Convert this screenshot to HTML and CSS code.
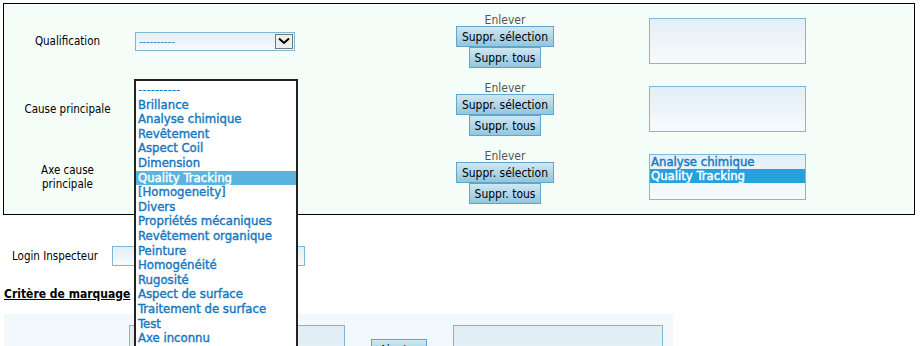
FILE: index.html
```html
<!DOCTYPE html>
<html lang="fr">
<head>
    <title>Saisie défaut</title>
    <link rel="stylesheet" href="styles.css">
</head>
<body>
    <div class="criteria">
        <div class="crit-row">
            <div class="crit-label">Qualification</div>
            <div class="crit-input">
                <div class="fake-select">
                    <span>----------</span>
                    <span class="select-arrow">
                        <svg width="12" height="8" viewBox="0 0 12 8"><path d="M1 1.5 L6 6 L11 1.5" fill="none" stroke="#000" stroke-width="2"/></svg>
                    </span>
                </div>
            </div>
            <div class="crit-actions">
                <span class="remove-title">Enlever</span>
                <button class="btn">Suppr. sélection</button>
                <button class="btn">Suppr. tous</button>
            </div>
            <div class="crit-chosen">
                <div class="chosen-box"></div>
            </div>
        </div>

        <div class="crit-row">
            <div class="crit-label">Cause principale</div>
            <div class="crit-input"></div>
            <div class="crit-actions">
                <span class="remove-title">Enlever</span>
                <button class="btn">Suppr. sélection</button>
                <button class="btn">Suppr. tous</button>
            </div>
            <div class="crit-chosen">
                <div class="chosen-box"></div>
            </div>
        </div>

        <div class="crit-row">
            <div class="crit-label">Axe cause<br>principale</div>
            <div class="crit-input"></div>
            <div class="crit-actions">
                <span class="remove-title">Enlever</span>
                <button class="btn">Suppr. sélection</button>
                <button class="btn">Suppr. tous</button>
            </div>
            <div class="crit-chosen">
                <div class="chosen-box">
                    <div class="chosen-item">Analyse chimique</div>
                    <div class="chosen-item selected">Quality Tracking</div>
                </div>
            </div>
        </div>
    </div>

    <div class="login-row">
        <label class="login-label">Login Inspecteur</label>
        <div class="text-box"></div>
    </div>

    <h3 class="section-title">Critère de marquage</h3>

    <div class="marking">
        <div class="mark-box left"></div>
        <button class="btn mark-btn">Ajouter</button>
        <div class="mark-box right"></div>
    </div>

    <div class="dropdown">
        <div class="dd-item dashes">----------</div>
        <div class="dd-item">Brillance</div>
        <div class="dd-item">Analyse chimique</div>
        <div class="dd-item">Revêtement</div>
        <div class="dd-item">Aspect Coil</div>
        <div class="dd-item">Dimension</div>
        <div class="dd-item hover">Quality Tracking</div>
        <div class="dd-item">[Homogeneity]</div>
        <div class="dd-item">Divers</div>
        <div class="dd-item">Propriétés mécaniques</div>
        <div class="dd-item">Revêtement organique</div>
        <div class="dd-item">Peinture</div>
        <div class="dd-item">Homogénéité</div>
        <div class="dd-item">Rugosité</div>
        <div class="dd-item">Aspect de surface</div>
        <div class="dd-item">Traitement de surface</div>
        <div class="dd-item">Test</div>
        <div class="dd-item">Axe inconnu</div>
    </div>
</body>
</html>
```

FILE: styles.css
```css
body {
    font-family: "DejaVu Sans Condensed", "DejaVu Sans", sans-serif;
    font-size: 11px;
    color: #000;
    background-color: #fff;
    margin: 0;
    padding: 3px;
    position: relative;
    overflow: hidden;
    height: 340px;
}

.criteria {
    width: 910px;
    border: 1px solid #000;
    background-color: #f4fdf8;
    padding: 3px 0;
}

.crit-row {
    display: grid;
    grid-template-columns: 127px 270px 208px 1fr;
    height: 68px;
    align-items: center;
}

.crit-label {
    text-align: center;
    font-size: 11.5px;
}

.crit-input {
    padding-left: 4px;
}

.fake-select {
    width: 155px;
    height: 17px;
    border: 1px solid #7fb8d4;
    background: linear-gradient(#e4eef6, #f6fafd);
    display: flex;
    align-items: center;
    justify-content: space-between;
    color: #1a82c6;
    padding-left: 3px;
    box-sizing: content-box;
}

.select-arrow {
    width: 18px;
    height: 15px;
    margin-right: 1px;
    border: 1px solid #777;
    background-color: #eee;
    display: flex;
    align-items: center;
    justify-content: center;
    box-sizing: border-box;
}

.crit-actions {
    display: flex;
    flex-direction: column;
    align-items: center;
}

.remove-title {
    color: #555;
    font-size: 12px;
    line-height: 12px;
}

.btn {
    font-family: inherit;
    font-size: 12px;
    color: #000;
    height: 21px;
    padding: 0 5px;
    border: 1px solid #5fa6cb;
    background: linear-gradient(#cfe7f3, #92c6df);
    margin: 0;
}

.crit-chosen {
    padding-left: 40px;
}

.chosen-box {
    width: 155px;
    height: 44px;
    border: 1px solid #7fb8d4;
    background: linear-gradient(#e3eef6, #f7fbfd);
    font-size: 13px;
    color: #1679bf;
    -webkit-text-stroke: 0.4px currentColor;
}

.chosen-item {
    height: 14px;
    line-height: 14px;
    padding-left: 1px;
}

.chosen-item.selected {
    background-color: #27a1db;
    color: #fff;
}

.login-row {
    display: flex;
    align-items: center;
    margin-top: 31px;
    padding-left: 9px;
}

.login-label {
    width: 100px;
    font-size: 11.5px;
}

.text-box {
    width: 191px;
    height: 18px;
    border: 1px solid #7fb8d4;
    background: linear-gradient(#e3eef6, #f7fbfd);
}

.section-title {
    font-size: 12px;
    font-weight: bold;
    text-decoration: underline;
    margin: 21px 0 0 1px;
}

.marking {
    width: 669px;
    height: 40px;
    margin: 13px 0 0 1px;
    background-color: #f3f8fd;
    display: flex;
    align-items: flex-start;
    padding-top: 11px;
}

.mark-box {
    height: 40px;
    border: 1px solid #7fb6d2;
    background: linear-gradient(#dfedf5, #e9f2f8);
}

.mark-box.left {
    width: 214px;
    margin-left: 125px;
}

.mark-box.right {
    width: 208px;
}

.mark-btn {
    width: 56px;
    margin: 14px 26px 0 26px;
}

.dropdown {
    position: absolute;
    left: 134px;
    top: 79px;
    width: 160px;
    height: 280px;
    border: 2px solid #222;
    background-color: #fff;
    padding-top: 2px;
}

.dd-item {
    font-size: 13px;
    color: #1679bf;
    height: 14.6px;
    line-height: 14px;
    padding-left: 2px;
    white-space: nowrap;
    -webkit-text-stroke: 0.4px currentColor;
}

.dd-item.dashes {
    -webkit-text-stroke: 0;
}

.dd-item.hover {
    background-color: #5ab4e0;
    color: #fff;
}
```
